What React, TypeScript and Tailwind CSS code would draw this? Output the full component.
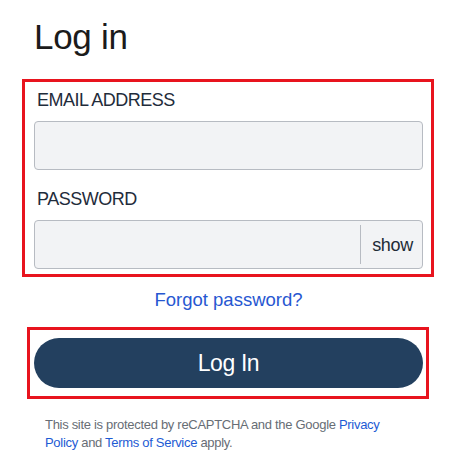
import * as React from 'react';

const font = { fontFamily: '"Liberation Sans", Arial, sans-serif' };

/** Login form with highlighted field group and submit button. */
export default function App() {
  const [showPw, setShowPw] = React.useState(false);

  return (
    <div className="min-h-[473px] w-[463px] bg-white" style={font}>
      <div className="ml-[34px] w-[389px] pt-[19px]">
        <h1 className="text-[35px] leading-[35px] tracking-[-0.3px] text-[#1b1b1b]">Log in</h1>

        {/* Fields */}
        <div className="ml-[-12px] mr-[-11px] mt-[25px] border-[3px] border-[#e8141e] pb-[5px] pl-[9px] pr-[8px] pt-[9px]">
          <label className="block pl-[3px] text-[18px] leading-[18px] tracking-[-0.5px] text-[#1f2c3b]">EMAIL ADDRESS</label>
          <input
            type="email"
            className="mt-[12px] block h-[49px] w-full rounded-[4px] border border-[#b7bbc2] bg-[#f2f3f5] px-3 text-[18px] outline-none"
          />
          <label className="mt-[20px] block pl-[3px] text-[18px] leading-[18px] tracking-[-0.5px] text-[#1f2c3b]">PASSWORD</label>
          <div className="mt-[12px] flex h-[49px] w-full items-center rounded-[4px] border border-[#b7bbc2] bg-[#f2f3f5]">
            <input
              type={showPw ? 'text' : 'password'}
              className="h-full min-w-0 flex-1 bg-transparent px-3 text-[18px] outline-none"
            />
            <div className="h-[39px] w-px bg-[#b7bbc2]" />
            <button
              type="button"
              onClick={() => setShowPw((v) => !v)}
              className="pl-[11px] pr-[9px] text-[18px] leading-[18px] tracking-[-0.3px] text-[#222b36]"
            >
              show
            </button>
          </div>
        </div>

        <div className="mt-[13px] text-center text-[18.5px] leading-[19px]">
          <a href="#" className="text-[#2757d1]">Forgot password?</a>
        </div>

        {/* Submit */}
        <div className="ml-[-7px] mr-[-6px] mt-[18px] border-[3px] border-[#e8141e] pb-[8px] pl-[4px] pr-[3px] pt-[8px]">
          <button className="flex h-[50px] w-full items-center justify-center rounded-full bg-[#23405f] text-[23px] tracking-[-0.4px] text-white">
            Log In
          </button>
        </div>

        <p className="ml-[11px] mt-[17px] w-[345px] text-[13px] leading-[17.5px] tracking-[-0.3px] text-[#676d75]">
          This site is protected by reCAPTCHA and the Google <a href="#" className="text-[#1d5bd4]">Privacy</a>{' '}
          <a href="#" className="text-[#1d5bd4]">Policy</a> and{' '}
          <a href="#" className="text-[#1d5bd4]">Terms of Service</a> apply.
        </p>
      </div>
    </div>
  );
}
